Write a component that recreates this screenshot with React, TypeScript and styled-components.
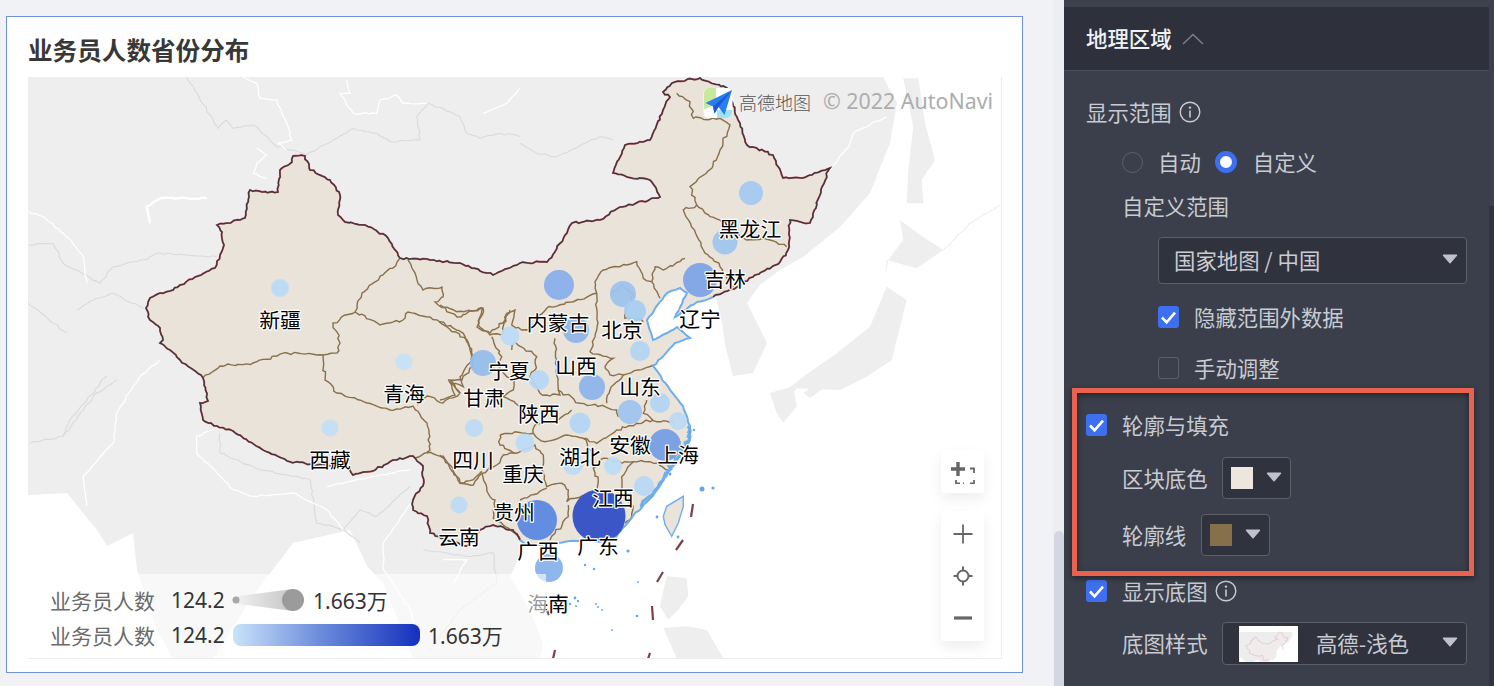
import React from "react";
import styled, { createGlobalStyle } from "styled-components";

const Global = createGlobalStyle`
  html, body { margin: 0; padding: 0; background: #f0f2f6; }
  body { font-family: "Noto Sans CJK SC", "Noto Sans", sans-serif; overflow: hidden; }
`;

/* ---------- map geometry helpers ---------- */
type Pt = [number, number];
const pts = (ox: number, oy: number, s: string, scale = 3): Pt[] =>
  s.trim().split(/\s+/).map((p) => {
    const [x, y] = p.split(",").map(Number);
    return [ox + x / scale, oy + y / scale] as Pt;
  });

const rough = (input: Pt[], amp = 1.1, step = 4.5, seed = 7): Pt[] => {
  let s = seed;
  const rnd = () => {
    s = (s * 16807) % 2147483647;
    return s / 2147483647 - 0.5;
  };
  const out: Pt[] = [];
  for (let i = 0; i < input.length - 1; i++) {
    const [ax, ay] = input[i];
    const [bx, by] = input[i + 1];
    const len = Math.hypot(bx - ax, by - ay);
    const n = Math.max(1, Math.round(len / (step * 0.8)));
    for (let k = 0; k < n; k++) {
      const t = k / n;
      const j = k === 0 ? 0 : amp * 1.35;
      out.push([ax + (bx - ax) * t + rnd() * 2 * j, ay + (by - ay) * t + rnd() * 2 * j]);
    }
  }
  out.push(input[input.length - 1]);
  return out;
};
const toD = (p: Pt[], close = false) =>
  p.map(([x, y], i) => `${i ? "L" : "M"}${x.toFixed(1)} ${y.toFixed(1)}`).join("") + (close ? "Z" : "");

const landBorder: Pt[] = pts(0, 0, `
  713,297 737,287 753,277 780,262 788,250 790,220 810,223 822,187 830,168 803,178 783,178 773,155 747,145 737,117 727,88 700,78 672,83 663,92 670,97 663,110 650,140 625,145 613,173 627,177 650,180 660,197 620,207 600,220 572,223 567,233 547,262 520,263 493,275 460,263 430,260 400,258 388,238 365,225 345,222 338,215 340,195 330,180 310,170 305,156 293,156 292,162 280,170 278,192 262,192 250,190 245,218 240,220 217,225 222,232 224,245 220,255 215,268 195,277 180,285 170,291 160,293 150,298 146,308 150,320 160,328 163,340 160,343 170,350 180,360 203,378 208,401 200,403 203,420 217,426 233,431 263,450 287,461 317,465 347,465 353,475 373,471 393,460 413,456 423,466 423,486 413,500 413,510 427,516 430,533 447,540 467,546 473,540 480,530 493,525 513,530 520,540
`, 1);
const coast: Pt[] = pts(0, 0, `
  520,540 527,545 558,543 587,540 613,540 633,516 653,496 663,480 675,463 690,440 690,426 683,406 670,390 653,366 675,343 690,338 677,327 653,340 647,320 667,293 680,288 687,293 675,317 697,302 713,297
`, 1);
const borderRough = rough(landBorder, 0.8, 4, 11);
const coastRough = rough(coast, 0.5, 5, 23);
const chinaD = toD([...borderRough, ...coastRough], true);
const islandCoastD = toD(rough(pts(0, 0, "688,426 689,440 675,463 663,480 651,496 640,506", 1), 1.4, 3, 401));

const provinces: string[] = [
  toD(rough(pts(0, 0, "203,378 220,366 253,363 287,353 323,355 337,353 340,343 333,323 355,312 362,293 383,275 397,262 400,258", 1))),
  toD(rough(pts(0, 0, "323,355 325,380 337,393 367,403 390,410 413,406 427,423 430,450 415,458", 1), 1, 4.5, 31)),
  toD(rough(pts(0, 0, "355,312 380,325 403,320 408,312 430,317 447,327 467,340 470,350 473,363 462,380 450,380 460,393 443,403 427,396 417,405", 1), 1, 4.5, 37)),
  toD(rough(pts(0, 0, "408,260 417,280 423,290 442,287 443,297 435,302 457,317 483,308 477,327 490,333 503,323 510,310", 1), 1, 4.5, 41)),
  toD(rough(pts(440, 250, "0,165 50,185 130,178 115,225 150,255 185,255 200,190 225,180 215,225 245,240 270,240 320,175 400,155 470,130 465,95 490,60 560,45 590,35 610,85 635,95 645,50 670,60 735,25"), 1, 4.5, 43)),
  toD(rough(pts(440, 250, "155,260 185,320 170,345 200,380 225,385 220,420 190,440 250,470"), 1, 4.5, 47)),
  toD(rough(pts(440, 250, "215,300 225,275 290,320 285,360 270,380 300,430 320,435 360,435 355,420"), 1, 4.5, 53)),
  toD(rough(pts(440, 250, "0,215 70,250 100,320 60,380 70,410 30,395 45,435 0,450"), 1, 4.5, 59)),
  toD(rough(pts(440, 250, "345,265 350,375 355,420 420,460 495,470 530,480 535,500"), 1, 4.5, 61)),
  toD(rough(pts(440, 250, "470,130 470,240 450,305 520,325 495,350 510,375 550,375 510,420 500,460"), 1, 4.5, 67)),
  toD(rough(pts(440, 250, "550,375 595,360 640,345"), 0.8, 4.5, 71)),
  toD(rough(pts(440, 250, "515,130 545,105 580,135 560,170 555,205 600,205 610,215"), 0.9, 4, 73)),
  toD(rough(pts(440, 250, "635,95 660,145"), 0.8, 4.5, 79)),
  toD(rough(pts(440, 250, "620,450 610,490 650,515 700,516"), 0.8, 4.5, 83)),
  toD(rough(pts(520, 60, "550,570 600,620 640,680"), 1, 4.5, 89)),
  toD(rough(pts(520, 60, "530,435 570,470 600,480 680,540 750,540 800,560"), 1, 4.5, 97)),
  toD(rough(pts(520, 60, "550,570 490,450 530,435 510,380 575,325 600,270 630,195 600,175 520,175 510,125 470,100"), 1, 4.5, 101)),
  toD(rough(pts(440, 410, "180,75 225,65 255,70 280,70 285,45 345,35 385,10 395,0"), 1, 4.5, 103)),
  toD(rough(pts(440, 410, "180,75 180,105 225,130 190,135 170,165 125,190 150,260 165,270 160,325 190,345 230,375 240,390"), 1, 4.5, 107)),
  toD(rough(pts(440, 410, "280,70 315,95 380,75 430,85 470,100 510,75 530,60 590,40 640,30"), 1, 4.5, 109)),
  toD(rough(pts(440, 410, "225,130 285,105 310,135 310,190 320,230 365,220 385,240 380,275 405,265 430,255"), 1, 4.5, 113)),
  toD(rough(pts(440, 410, "240,270 320,235"), 0.9, 4.5, 127)),
  toD(rough(pts(440, 410, "430,85 455,130 460,175 475,215 470,240"), 1, 4.5, 131)),
  toD(rough(pts(440, 410, "460,175 490,145 545,160 580,155 630,155 690,180"), 1, 4.5, 137)),
  toD(rough(pts(440, 410, "580,155 545,200 550,260 580,290 575,320 555,340"), 1, 4.5, 139)),
  toD(rough(pts(440, 410, "385,285 385,320 345,370 330,390"), 1, 4.5, 149)),
  toD(rough(pts(440, 410, "0,135 40,180 60,220 100,225 125,190"), 1, 4.5, 151)),
  toD(rough(pts(0, 343, "1280,330 1330,340 1380,420 1420,410 1445,385"), 1, 4.5, 157)),
  toD(rough(pts(0, 343, "1345,110 1380,150"), 0.6, 4.5, 163)),
];

const landD = toD(pts(0, 0, `
  28,77 883,77 897,103 890,143 870,193 840,227 803,257 780,270 760,285 747,303 767,343 753,373 733,376 725,345 722,322 716,298 690,282 650,290 635,330 640,400 640,460 600,530 520,535 520,555 510,577 530,610 543,643 540,659 413,659 383,583 367,566 350,530 293,543 253,596 213,659 173,659 157,630 137,570 133,533 107,546 97,530 67,493 28,495
`, 1), true);

const islands: string[] = [
  toD(pts(520, 60, "1150,55 1195,55 1215,190 1245,300 1205,360 1210,430 1160,430 1165,330 1180,200"), true),
  toD(pts(520, 60, "1140,480 1200,525 1270,570 1190,625 1100,600 1095,650 1105,600 1150,540"), true),
  toD(pts(520, 60, "1100,680 1160,720 1115,900 1040,950 960,990 830,985 790,1029 760,1020 850,950 950,880 1050,800"), true),
  toD(pts(520, 343, "750,150 820,130 830,190 790,240 770,210"), true),
  toD(pts(520, 343, "850,150 900,115 925,125 870,165"), true),
  toD(pts(520, 343, "440,700 500,705 505,760 475,800 445,830 420,790"), true),
  toD(pts(520, 343, "430,855 500,850 560,860 610,946 470,946"), true),
];

const countryLines: string[] = [
  "560,232 655,385 680,360 700,385 760,375 830,440 880,450 920,465 1060,385 1130,400 1170,425 1260,420 1250,350 1285,310 1380,350 1400,400 1440,415 1500,400 1560,410",
  "85,735 160,730 190,790 230,810 300,850 340,800 430,780 470,760 650,770",
  "230,930 280,900 340,880 430,925",
  "85,910 200,1000",
].map((s) => toD(rough(pts(0, 0, s), 0.7, 5, 211)));
countryLines.push(
  toD(rough(pts(520, 60, "0,250 50,280 110,290 240,230 280,240"), 0.6, 5, 223)),
  toD(rough(pts(0, 343, "90,300 190,280 280,160 350,110"), 0.6, 5, 227)),
  toD(rough(pts(0, 343, "320,100 210,230 190,280"), 0.6, 5, 229)),
  toD(rough(pts(0, 343, "660,270 660,330 780,380 930,410 950,540 1030,560 1080,600"), 0.6, 5, 233)),
  toD(rough(pts(0, 343, "1230,430 1130,520 1080,500 1030,560"), 0.6, 5, 239)),
  toD(rough(pts(0, 343, "1270,620 1400,640 1480,630 1490,720 1380,800 1290,920"), 0.6, 5, 241)),
);
const kurilD = toD(rough(pts(520, 60, "1270,570 1350,490 1440,435"), 0.4, 5, 251));

const rivers: string[] = [
  toD(rough(pts(0, 0, "85,635 130,650 200,710 250,770 260,850"), 0.6, 5, 257)),
  toD(rough(pts(0, 0, "730,232 770,250 780,295 830,300 860,370 875,420 835,430 860,450"), 0.6, 5, 263)),
  toD(rough(pts(0, 0, "1040,240 1050,280 1020,280 1060,340 1130,340 1140,300 1190,285 1210,310 1280,310"), 0.6, 5, 269)),
  toD(rough(pts(0, 0, "450,670 440,620 480,595 620,595"), 0.5, 5, 271)),
  toD(rough(pts(0, 0, "770,445 800,465 770,490 760,520 800,535"), 0.5, 5, 277)),
  toD(rough(pts(0, 0, "1450,340 1520,310 1560,265"), 0.2, 5, 281)),
  toD(rough(pts(0, 343, "480,50 420,100 350,210 340,300 250,400 260,490"), 0.6, 5, 283)),
  toD(rough(pts(0, 343, "640,260 590,280 590,330 700,440 760,460 880,450 980,500 1030,560"), 0.6, 5, 293)),
  toD(rough(pts(0, 343, "980,430 1120,400 1230,380"), 0.5, 5, 307)),
  toD(rough(pts(0, 343, "1240,470 1150,600 1150,680 1230,800 1260,900"), 0.5, 5, 311)),
  toD(rough(pts(0, 343, "1330,650 1400,650 1360,720"), 0.4, 5, 313)),
  toD(rough(pts(520, 60, "930,330 990,250 1000,220 1100,170"), 0.6, 5, 317)),
];

const taiwanD = toD(pts(520, 343, "430,520 440,490 490,460 490,490 475,540 455,580 435,545"), true);

const dashes: [number, number, number, number][] = [
  [693, 504, 691, 517], [683, 540, 676, 550], [663, 572, 657, 582], [652, 606, 653, 620],
  [650, 653, 648, 659], [555, 650, 553, 659], [546, 608, 549, 615],
];

const seaDots: [number, number, number][] = [
  [702, 489, 2.5], [713, 488, 1.6], [628, 551, 1.6], [585, 565, 1.2], [594, 569, 1.2], [638, 582, 1], [637, 616, 1.3],
  [612, 630, 1], [575, 598, 1.4], [578, 601, 1.2], [570, 604, 1.2], [558, 606, 1.2], [576, 606, 1], [657, 517, 1.4], [678, 537, 1.4],
  [694, 430, 1.2], [690, 432, 1.2], [687, 453, 1.5], [670, 474, 1.5], [598, 607, 1], [602, 610, 1], [596, 604, 1],
];

const bubbles: { x: number; y: number; r: number; c: string }[] = [
  { x: 280, y: 288, r: 9, c: "#bbdaf6" }, { x: 330, y: 428, r: 8.5, c: "#c2def6" }, { x: 404, y: 362, r: 8.5, c: "#c5e1f6" },
  { x: 474, y: 428, r: 9, c: "#bddbf5" }, { x: 483, y: 363, r: 13, c: "#94bdec" }, { x: 459, y: 505, r: 8.5, c: "#bcdbf5" },
  { x: 525, y: 443, r: 9.5, c: "#bcdbf5" }, { x: 751, y: 193, r: 12, c: "#a5c9f0" }, { x: 725, y: 242, r: 12.5, c: "#a0c5ef" },
  { x: 700, y: 280, r: 17, c: "#7ca4e5" }, { x: 559, y: 285, r: 15, c: "#88aeea" }, { x: 623, y: 294, r: 13, c: "#9cc2ec" },
  { x: 635, y: 311, r: 11, c: "#a8cdf1" }, { x: 576, y: 330, r: 13, c: "#8fb5ea" }, { x: 640, y: 351, r: 10, c: "#b2d3f3" },
  { x: 539, y: 380, r: 10, c: "#b7d7f4" }, { x: 510, y: 336, r: 9.5, c: "#bcdbf5" }, { x: 592, y: 387, r: 13, c: "#8cb4e9" },
  { x: 630, y: 412, r: 12, c: "#9dc3ee" }, { x: 660, y: 403, r: 10, c: "#b1d3f3" }, { x: 580, y: 423, r: 10.5, c: "#b4d5f4" },
  { x: 678, y: 421, r: 9, c: "#bbdaf4" }, { x: 665, y: 445, r: 16, c: "#769de3" }, { x: 613, y: 466, r: 9, c: "#bcdcf5" },
  { x: 573, y: 465, r: 10, c: "#bcdcf5" }, { x: 644, y: 486, r: 10, c: "#b8d8f4" }, { x: 599, y: 516, r: 26.5, c: "#2f4dc6" },
  { x: 537, y: 520, r: 20, c: "#5a87e1" }, { x: 549, y: 568, r: 14, c: "#88b3ec" },
];

const labels: { x: number; y: number; t: string }[] = [
  { x: 280, y: 319, t: "新疆" }, { x: 330, y: 459, t: "西藏" }, { x: 404, y: 393, t: "青海" }, { x: 484, y: 397, t: "甘肃" },
  { x: 509, y: 370, t: "宁夏" }, { x: 558, y: 322, t: "内蒙古" }, { x: 622, y: 329, t: "北京" }, { x: 700, y: 318, t: "辽宁" },
  { x: 725, y: 278, t: "吉林" }, { x: 750, y: 228, t: "黑龙江" }, { x: 576, y: 365, t: "山西" }, { x: 640, y: 386, t: "山东" },
  { x: 539, y: 413, t: "陕西" }, { x: 473, y: 459, t: "四川" }, { x: 523, y: 473, t: "重庆" }, { x: 580, y: 456, t: "湖北" },
  { x: 630, y: 444, t: "安徽" }, { x: 678, y: 454, t: "上海" }, { x: 613, y: 497, t: "江西" }, { x: 514, y: 511, t: "贵州" },
  { x: 459, y: 536, t: "云南" }, { x: 538, y: 550, t: "广西" }, { x: 598, y: 545, t: "广东" }, { x: 548, y: 603, t: "海南" },
];

/* ---------- page ---------- */
const Page = styled.div`
  display: flex;
  width: 1494px;
  height: 686px;
  overflow: hidden;
  background: #f0f2f6;
`;
const Main = styled.main`
  width: 1053px;
  flex: none;
  padding: 16px 0 0 6px;
  box-sizing: border-box;
`;
const Card = styled.section`
  width: 1017px;
  height: 657px;
  box-sizing: border-box;
  border: 1px solid #6f92d8;
  background: #fff;
  padding: 0 20px 0 21px;
`;
const Title = styled.h1`
  margin: 0;
  height: 60px;
  line-height: 64px;
  font-size: 24.6px;
  font-weight: 700;
  color: #383838;
  white-space: nowrap;
`;
const MapFrame = styled.div`
  position: relative;
  width: 974px;
  height: 582px;
  box-sizing: border-box;
  border-right: 1px solid #ececec;
  border-bottom: 1px solid #ececec;
  overflow: hidden;
`;
const MapSvg = styled.svg`
  display: block;
  width: 974px;
  height: 582px;
`;
const Province = styled.text`
  font-size: 20.8px;
  fill: #000;
  stroke: #fff;
  stroke-width: 2.4px;
  paint-order: stroke;
  stroke-linejoin: round;
  text-anchor: middle;
  dominant-baseline: central;
`;
const Attribution = styled.div`
  position: absolute;
  left: 675px;
  top: 10px;
  display: flex;
  align-items: center;
  height: 32px;
`;
const LogoMark = styled.svg`
  width: 30px;
  height: 32px;
  flex: none;
`;
const AmapWord = styled.span`
  font-size: 18px;
  font-weight: 300;
  color: #555;
  margin: 0 0 2px 6px;
  width: 84px;
`;
const Copyright = styled.span`
  font-family: "Noto Sans", sans-serif;
  font-size: 21.4px;
  color: #adadad;
  white-space: nowrap;
  margin-bottom: 6px;
`;
const Legend = styled.div`
  position: absolute;
  left: 0;
  bottom: 0;
  width: 518px;
  height: 84px;
  padding: 8px 0 0 22px;
  box-sizing: border-box;
  background: rgba(255, 255, 255, 0.6);
`;
const LegendRow = styled.div`
  display: flex;
  align-items: center;
  height: 35px;
  font-family: "Noto Sans", "Noto Sans CJK SC", sans-serif;
  font-size: 21px;
`;
const LegendName = styled.span`
  color: #6a6a6a;
  width: 121px;
  flex: none;
`;
const LegendValue = styled.span`
  color: #333;
  width: ${(p: { $w: number }) => p.$w}px;
  flex: none;
  white-space: nowrap;
`;
const SizeRamp = styled.svg`
  width: 74px;
  height: 24px;
  flex: none;
  margin-right: 7px;
`;
const ColorRamp = styled.div`
  width: 187px;
  height: 22px;
  flex: none;
  border-radius: 8px;
  margin: 0 8px 0 0;
  background: linear-gradient(90deg, #c9e3fa 0%, #6f8fdc 45%, #1430bd 100%);
`;
const ControlStack = styled.div`
  position: absolute;
  left: 913px;
  top: 373px;
  display: flex;
  flex-direction: column;
  gap: 18px;
`;
const ControlBox = styled.div`
  width: 43px;
  height: ${(p: { $h: number }) => p.$h}px;
  background: #fff;
  border-radius: 2px;
  box-shadow: 0 6px 14px rgba(0, 0, 0, 0.07);
  display: flex;
  flex-direction: column;
  align-items: center;
  justify-content: space-around;
  padding: 2px 0;
  box-sizing: border-box;
`;
const CtlIcon = styled.svg`
  width: 24px;
  height: 24px;
  display: block;
`;

/* ---------- scrollbar ---------- */
const Track = styled.div`
  width: 11px;
  flex: none;
  background: #eceef1;
  padding-top: 531px;
  box-sizing: border-box;
`;
const Thumb = styled.div`
  height: 155px;
  margin-left: 1px;
  background: #d4d7e2;
  border-radius: 5px 5px 0 0;
`;

/* ---------- right panel ---------- */
const Panel = styled.aside`
  position: relative;
  width: 425px;
  flex: none;
  height: 686px;
  background: #3a3f4b;
  color: #c9cbd1;
  font-size: 21.4px;
`;
const TopStrip = styled.div`
  height: 7px;
  background: #3c414d;
`;
const Header = styled.header`
  height: 63px;
  background: #2e313c;
  border-bottom: 1px solid #4a4e5a;
  display: flex;
  align-items: center;
  padding-left: 22px;
  gap: 10px;
  color: #f1f1f3;
  font-weight: 500;
`;
const Label = styled.span`
  padding-bottom: 2px;
  white-space: nowrap;
`;
const Row = styled.div<{ $top: number; $left: number }>`
  display: flex;
  align-items: center;
  height: 40px;
  margin-top: ${(p) => p.$top}px;
  margin-left: ${(p) => p.$left}px;
`;
const RadioDot = styled.span<{ $on?: boolean }>`
  box-sizing: border-box;
  width: ${(p) => (p.$on ? 22 : 21)}px;
  height: ${(p) => (p.$on ? 22 : 21)}px;
  border-radius: 50%;
  flex: none;
  margin-right: ${(p) => (p.$on ? 16 : 15)}px;
  border: ${(p) => (p.$on ? "5.5px solid #3d6ff0" : "1px solid #5b606b")};
  background: ${(p) => (p.$on ? "#fff" : "transparent")};
`;
const RadioLabel = styled(Label)`
  margin-right: 14px;
`;
const Box = styled.span<{ $on?: boolean }>`
  box-sizing: border-box;
  width: 21px;
  height: 22px;
  flex: none;
  border-radius: 3px;
  margin-right: 15px;
  display: flex;
  align-items: center;
  justify-content: center;
  border: ${(p) => (p.$on ? "none" : "1px solid #5b606b")};
  background: ${(p) => (p.$on ? "#3d6ff0" : "transparent")};
`;
const InfoIcon = styled.svg`
  width: 22px;
  height: 22px;
  flex: none;
  margin-left: 7px;
`;
const Select = styled.div<{ $top: number; $left: number; $w: number; $h: number }>`
  box-sizing: border-box;
  margin-top: ${(p) => p.$top}px;
  margin-left: ${(p) => p.$left}px;
  width: ${(p) => p.$w}px;
  height: ${(p) => p.$h}px;
  border: 1px solid #5c606a;
  border-radius: 4px;
  background: #30333e;
  display: flex;
  align-items: center;
  padding: 0 8px 0 15px;
  justify-content: space-between;
`;
const FieldRow = styled.div<{ $top: number; $left: number; $gap: number; $h: number }>`
  display: flex;
  align-items: center;
  gap: ${(p) => p.$gap}px;
  height: ${(p) => p.$h}px;
  margin-top: ${(p) => p.$top}px;
  margin-left: ${(p) => p.$left}px;
`;
const ColorButton = styled.div`
  box-sizing: border-box;
  width: 69px;
  height: 42px;
  border: 1px solid #5c606a;
  border-radius: 4px;
  background: #30333e;
  display: flex;
  align-items: center;
  padding: 0 8px;
  justify-content: space-between;
`;
const Swatch = styled.span<{ $c: string }>`
  width: 22px;
  height: 22px;
  background: ${(p) => p.$c};
`;
const MapStyleSelect = styled.div`
  box-sizing: border-box;
  width: 245px;
  height: 43px;
  border: 1px solid #5c606a;
  border-radius: 4px;
  background: #30333e;
  display: flex;
  align-items: center;
  padding: 0 8px 0 16px;
`;
const ThumbMap = styled.svg`
  width: 59px;
  height: 36px;
  flex: none;
  background: #fff;
  margin-right: 18px;
`;
const StyleName = styled(Label)`
  flex: 1;
`;
const Highlight = styled.div`
  position: absolute;
  left: 8px;
  top: 388px;
  width: 402px;
  height: 188px;
  box-sizing: border-box;
  border: 5.5px solid #e8624f;
  box-shadow: 0 2px 6px rgba(0, 0, 0, 0.45), inset 0 2px 6px rgba(0, 0, 0, 0.45);
  pointer-events: none;
`;
const Edge = styled.div`
  flex: 1;
  background: linear-gradient(#3c414d 0 206px, #30343e 206px);
`;
const CaretSvg = styled.svg`
  width: 16px;
  height: 10px;
  flex: none;
  margin-bottom: 3px;
`;

const Caret = () => (
  <CaretSvg viewBox="0 0 16 10">
    <path d="M1.5 1.2h13L8 8.8z" fill="#bfc2cb" stroke="#bfc2cb" strokeWidth="1.4" strokeLinejoin="round" />
  </CaretSvg>
);
const Check = () => (
  <svg width="17" height="15" viewBox="0 0 17 15">
    <path d="M2 7.5l4.6 4.8L15 2.6" fill="none" stroke="#fff" strokeWidth="2.6" />
  </svg>
);
const Info = () => (
  <InfoIcon viewBox="0 0 22 22">
    <circle cx="11" cy="11" r="9.8" fill="none" stroke="#c9cbd1" strokeWidth="1.4" />
    <circle cx="11" cy="6.6" r="1.2" fill="#c9cbd1" />
    <path d="M11 9.4v7" stroke="#c9cbd1" strokeWidth="1.6" />
  </InfoIcon>
);

const ChinaThumb = () => (
  <ThumbMap viewBox="30 -20 960 585">
    <path d={landD} fill="#ededee" />
    <path d={toD(rough(landBorder, 1, 8, 5))} fill="#f1ecec" stroke="#d2847f" strokeWidth="5" />
  </ThumbMap>
);

export default function App() {
  return (
    <Page>
      <Global />
      <Main>
        <Card>
          <Title>业务员人数省份分布</Title>
          <MapFrame>
            <MapSvg viewBox="28 77 974 582" aria-label="map">
              <defs>
                <linearGradient id="ramp" x1="0" x2="1" y1="0" y2="0">
                  <stop offset="0" stopColor="#f1f1f1" />
                  <stop offset="1" stopColor="#c6c6c6" />
                </linearGradient>
                <filter id="soft" x="-2%" y="-2%" width="104%" height="104%">
                  <feGaussianBlur stdDeviation="0.5" />
                </filter>
              </defs>
              <rect x="28" y="77" width="974" height="582" fill="#fff" />
              <g filter="url(#soft)">
                <path d={landD} fill="#eeeeef" />
                {islands.map((d, i) => (
                  <path key={i} d={d} fill="#eeeeef" />
                ))}
                {countryLines.map((d, i) => (
                  <path key={i} d={d} fill="none" stroke="#dadadb" strokeWidth="1.1" />
                ))}
                <path d={kurilD} fill="none" stroke="#eeeeef" strokeWidth="1.1" />
                {rivers.map((d, i) => (
                  <path key={i} d={d} fill="none" stroke="#fff" strokeWidth={i === 3 ? 2.4 : 1.3} />
                ))}
              </g>
              <path d={chinaD} fill="#e9e3d9" />
              <path d={taiwanD} fill="#e9e3d9" stroke="#6fb0ee" strokeWidth="1.4" />
              <path d="M537 563h16l-2 12-10 2z" fill="#e9e3d9" />
              {provinces.map((d, i) => (
                <path key={i} d={d} fill="none" stroke="#8a7049" strokeWidth="1.4" />
              ))}
              <path d={toD(borderRough)} fill="none" stroke="#b0515f" strokeWidth="1.9" />
              <path d={toD(borderRough)} fill="none" stroke="#3e3438" strokeWidth="1.2" />
              <path d={toD(coastRough)} fill="none" stroke="#6eaeee" strokeWidth="2" />
              <path d={islandCoastD} fill="none" stroke="#6eaeee" strokeWidth="3" />
              {seaDots.map(([x, y, r], i) => (
                <circle key={i} cx={x} cy={y} r={r} fill="#64a6ee" />
              ))}
              {dashes.map(([a, b, c, d], i) => (
                <line key={i} x1={a} y1={b} x2={c} y2={d} stroke="#7b3f45" strokeWidth="2.2" />
              ))}
              {bubbles.map((b, i) => (
                <circle key={i} cx={b.x} cy={b.y} r={b.r} fill={b.c} opacity="0.94" />
              ))}
              {labels.map((l) => (
                <Province key={l.t} x={l.x} y={l.y}>
                  {l.t}
                </Province>
              ))}
            </MapSvg>
            <Attribution>
              <LogoMark viewBox="0 0 30 32">
                <rect x="0.5" y="1" width="29" height="30" rx="5" fill="#fff" />
                <path d="M1 6a5 5 0 0 1 5-5h7v17l-12 4z" fill="#c6ea9a" />
                <path d="M14 23h15v3a5 5 0 0 1-5 5H14z" fill="#9fe2f7" />
                <path d="M2.5 16L29 3 21.5 28 15.5 20l-4 6.5-1.5-7z" fill="#2a7df0" />
                <path d="M10 19.5L29 3 15.5 20l-4 6.5z" fill="#175bd0" />
              </LogoMark>
              <AmapWord>高德地图</AmapWord>
              <Copyright>© 2022 AutoNavi</Copyright>
            </Attribution>
            <Legend>
              <LegendRow>
                <LegendName>业务员人数</LegendName>
                <LegendValue $w={61}>124.2</LegendValue>
                <SizeRamp viewBox="0 0 74 24">
                  <path d="M3 8.5 L61 1 V23 L3 15.5Z" fill="url(#ramp)" />
                  <circle cx="4" cy="12" r="3.5" fill="#a8a8a8" />
                  <circle cx="61" cy="12" r="11" fill="#9b9b9b" />
                </SizeRamp>
                <LegendValue $w={80}>1.663万</LegendValue>
              </LegendRow>
              <LegendRow>
                <LegendName>业务员人数</LegendName>
                <LegendValue $w={62}>124.2</LegendValue>
                <ColorRamp />
                <LegendValue $w={80}>1.663万</LegendValue>
              </LegendRow>
            </Legend>
            <ControlStack>
              <ControlBox $h={43}>
                <CtlIcon viewBox="0 0 24 24">
                  <path d="M7 2v14M0 9h14" stroke="#666" strokeWidth="3.4" />
                  <path d="M5 20v3.5h4M12 23.5h1M19 23.5h4V20M23 13V8.5h-4" fill="none" stroke="#666" strokeWidth="1.8" />
                </CtlIcon>
              </ControlBox>
              <ControlBox $h={130}>
                <CtlIcon viewBox="0 0 24 24">
                  <path d="M12 2.5v19M2.5 12h19" stroke="#666" strokeWidth="1.8" />
                </CtlIcon>
                <CtlIcon viewBox="0 0 24 24">
                  <circle cx="12" cy="12" r="5.5" fill="none" stroke="#666" strokeWidth="2" />
                  <path d="M12 2.5v4M12 17.5v4M2.5 12h4M17.5 12h4" stroke="#666" strokeWidth="2" />
                </CtlIcon>
                <CtlIcon viewBox="0 0 24 24">
                  <path d="M3 12h18" stroke="#666" strokeWidth="3.2" />
                </CtlIcon>
              </ControlBox>
            </ControlStack>
          </MapFrame>
        </Card>
      </Main>
      <Track>
        <Thumb />
      </Track>
      <Panel>
        <TopStrip />
        <Header>
          <Label>地理区域</Label>
          <svg width="22" height="12" viewBox="0 0 22 12">
            <path d="M1 11L11 1.5 21 11" fill="none" stroke="#7d818c" strokeWidth="1.4" />
          </svg>
        </Header>
        <Row $top={21} $left={22}>
          <Label>显示范围</Label>
          <Info />
        </Row>
        <Row $top={10} $left={58}>
          <RadioDot />
          <RadioLabel>自动</RadioLabel>
          <RadioDot $on />
          <RadioLabel>自定义</RadioLabel>
        </Row>
        <Row $top={4} $left={58}>
          <Label>自定义范围</Label>
        </Row>
        <Select $top={11} $left={94} $w={309} $h={47}>
          <Label>国家地图 / 中国</Label>
          <Caret />
        </Select>
        <Row $top={13} $left={94}>
          <Box $on>
            <Check />
          </Box>
          <Label>隐藏范围外数据</Label>
        </Row>
        <Row $top={11} $left={94}>
          <Box />
          <Label>手动调整</Label>
        </Row>
        <Row $top={17} $left={22}>
          <Box $on>
            <Check />
          </Box>
          <Label>轮廓与填充</Label>
        </Row>
        <FieldRow $top={12} $left={58} $gap={14.4} $h={42}>
          <Label>区块底色</Label>
          <ColorButton>
            <Swatch $c="#ece6df" />
            <Caret />
          </ColorButton>
        </FieldRow>
        <FieldRow $top={15} $left={58} $gap={15} $h={42}>
          <Label>轮廓线</Label>
          <ColorButton>
            <Swatch $c="#86704c" />
            <Caret />
          </ColorButton>
        </FieldRow>
        <Row $top={15} $left={22}>
          <Box $on>
            <Check />
          </Box>
          <Label>显示底图</Label>
          <Info />
        </Row>
        <FieldRow $top={11} $left={58} $gap={14.4} $h={43}>
          <Label>底图样式</Label>
          <MapStyleSelect>
            <ChinaThumb />
            <StyleName>高德-浅色</StyleName>
            <Caret />
          </MapStyleSelect>
        </FieldRow>
        <Highlight />
      </Panel>
      <Edge />
    </Page>
  );
}
